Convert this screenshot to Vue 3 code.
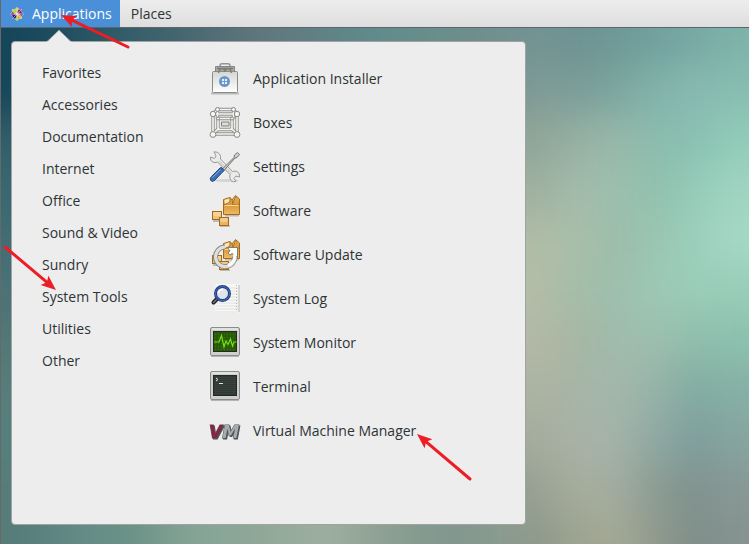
<script setup>
import { ref } from 'vue'

const categories = [
  'Favorites', 'Accessories', 'Documentation', 'Internet', 'Office',
  'Sound & Video', 'Sundry', 'System Tools', 'Utilities', 'Other'
]
const selected = ref('System Tools')

const apps = [
  { id: 'installer', name: 'Application Installer' },
  { id: 'boxes', name: 'Boxes' },
  { id: 'settings', name: 'Settings' },
  { id: 'software', name: 'Software' },
  { id: 'update', name: 'Software Update' },
  { id: 'log', name: 'System Log' },
  { id: 'monitor', name: 'System Monitor' },
  { id: 'terminal', name: 'Terminal' },
  { id: 'vm', name: 'Virtual Machine Manager' }
]

// Wallpaper colour mesh, blended by a blur filter
const top = '15465a 1f4d5f 2b5664 375f6b 44656f 526d76 5f777c 617c82 5f8488 608b8c 668d8b 6c8e8b 718f8e'
const bottom = '557c79 5f8583 668e86 6b9287 80a092 88a799 8ea696 98ac9c 9caea0 8fa193 869b8f 81968f 8a9c90'
const left = ['', '', '325f69', '3a6770', '416d73', '4a7277', '527876', '577d7b', '54807c', '', '']
const right = [
  '739493 6e9293 6e9896 72a09e 78a9a4 7db3aa',
  '819c97 7b9c97 7ba69e 83b2aa 87bab1 87bdb0',
  '90a598 96b0a3 98b8aa 8bbcad 89c0b2 92ccb9',
  '9fb0a0 a3bba9 9dbfae 91c0ae 94ccb8 9fd4c1',
  'b0bca6 a9bfa9 9cbdaa 9ac5b1 9bd0bc a5d9c6',
  'b3bda8 a5bda7 9dbfac 9cc8b5 9bcdb9 98cdb8',
  'b3b8a5 a7b7a3 a0bbab 9dbfb0 8fbdab 8cc1af',
  'adb3a2 a6b5a6 a4b7ab 96b3a8 82aba1 86b0a5',
  'a5ac9d a8b2a6 a4b3a9 90a8a2 7e9e9b 87a5a0',
  '98a193 a6ac9b a3aea0 8b9b92 80928f 879895',
  '8c988a 9da390 a5a995 909b8c 7f8e89 869390'
]
const cells = []
right.forEach((row, r) => {
  const east = row.split(' ')
  const west = r < 2 ? top.split(' ') : r > 8 ? bottom.split(' ') : [...Array(12).fill(left[r]), east[0]]
  const line = [...west, ...east]
  line.forEach((color, c) => {
    const x0 = c === 0 ? -120 : c * 40 - 5
    const x1 = c === line.length - 1 ? 900 : c * 40 + 36
    const y0 = r === 0 ? -100 : r * 50 + 15
    const y1 = r === right.length - 1 ? 700 : r * 50 + 66
    cells.push({ x: x0, y: y0, w: x1 - x0, h: y1 - y0, fill: '#' + color })
  })
})

const arrows = [
  { x: 61, y: 15, tx: 128, ty: 47 },
  { x: 56, y: 290, tx: 5, ty: 247 },
  { x: 417, y: 434, tx: 470, ty: 479 }
].map(a => {
  const len = Math.hypot(a.x - a.tx, a.y - a.ty)
  return { ...a, len, angle: Math.atan2(a.y - a.ty, a.x - a.tx) * 180 / Math.PI }
})
</script>

<template>
  <div class="desktop">
    <svg class="wallpaper" viewBox="0 0 749 544" preserveAspectRatio="none" aria-hidden="true">
      <defs>
        <filter id="soft" filterUnits="userSpaceOnUse" x="-120" y="-100" width="1020" height="800" color-interpolation-filters="sRGB">
          <feGaussianBlur stdDeviation="18" />
        </filter>
      </defs>
      <g filter="url(#soft)">
        <rect v-for="(c, i) in cells" :key="i" :x="c.x" :y="c.y" :width="c.w" :height="c.h" :fill="c.fill" />
      </g>
    </svg>

    <header class="bar">
      <button class="bar-item active" type="button" aria-expanded="true">
        <svg class="logo" viewBox="0 0 14 14" aria-hidden="true">
          <path d="M7 0L9 2H12V5L14 7L12 9V12H9L7 14L5 12H2V9L0 7L2 5V2H5Z" fill="#d9d4e4" />
          <path d="M2.500 2.500H6.500V6.500H2.500Z" fill="#a5cd39" />
          <path d="M7.500 2.500H11.500V6.500H7.500Z" fill="#932279" />
          <path d="M2.500 7.500H6.500V11.500H2.500Z" fill="#262577" />
          <path d="M7.500 7.500H11.500V11.500H7.500Z" fill="#efa724" />
          <path d="M7 .5L9 2.500L7 4.500L5 2.500Z" fill="#d6c94a" />
          <path d="M.5 7L2.500 5L4.500 7L2.500 9Z" fill="#932279" />
          <path d="M13.500 7L11.500 5L9.500 7L11.500 9Z" fill="#5b4a94" />
          <path d="M7 13.500L9 11.500L7 9.500L5 11.500Z" fill="#9ccd2a" />
          <path d="M7 1V13M1 7H13M3 3L11 11M11 3L3 11" stroke="#f1edf5" stroke-width=".5" />
        </svg>
        <span>Applications</span>
      </button>
      <button class="bar-item" type="button">Places</button>
    </header>

    <main class="menu">
      <svg class="pointer" viewBox="0 0 26 13" aria-hidden="true">
        <path d="M0 13V12L2 11L13 0L24 11L26 12V13Z" fill="#ededed" />
        <path d="M1 11.500L13 .5L25 11.500" fill="none" stroke="#b4babb" stroke-width=".8" />
      </svg>
      <nav class="categories" aria-label="Categories">
        <button v-for="c in categories" :key="c" class="category" type="button"
          :aria-pressed="selected === c" @click="selected = c">{{ c }}</button>
      </nav>
      <nav class="apps" aria-label="Programs">
        <button v-for="app in apps" :key="app.id" class="app" type="button">
          <svg class="icon" viewBox="0 0 32 32" aria-hidden="true">
            <defs>
              <linearGradient :id="app.id + '-light'" x1="0" y1="0" x2="0" y2="1">
                <stop offset="0" stop-color="#d5d7d2" /><stop offset="1" stop-color="#ffffff" />
              </linearGradient>
              <linearGradient :id="app.id + '-amber'" x1="0" y1="0" x2="0" y2="1">
                <stop offset="0" stop-color="#f6cf8e" /><stop offset=".45" stop-color="#d99535" /><stop offset="1" stop-color="#eebb69" />
              </linearGradient>
            </defs>

            <g v-if="app.id === 'installer'">
              <path d="M2 30.500H30" stroke="#b9b9b7" stroke-width="2" />
              <path d="M11 5V3Q11 .8 13 .8H19Q21 .8 21 3V5" fill="none" stroke="#92948f" stroke-width="1.500" />
              <path d="M6.500 3.500H25.500V9.500H6.500Z" fill="#a9aba6" stroke="#858782" />
              <path d="M8 5.500H24" stroke="#777973" stroke-width="1.500" />
              <rect x="3.500" y="8.500" width="25" height="21" rx="1" fill="url(#installer-light)" stroke="#8a8c87" />
              <path d="M9.500 10Q10.500 5.500 13 5.500Q15.500 5.500 16 9Q16.500 5.500 19 5.500Q21.500 5.500 22.500 10" fill="none" stroke="#7e807b" stroke-width="1.500" />
              <circle cx="15.500" cy="18.500" r="5.500" fill="#6f9bd1" />
              <circle cx="15.500" cy="18.500" r="4.200" fill="none" stroke="#5b8cca" stroke-width=".7" />
              <path d="M13 16h2v2h-2zM16 16h2v2h-2zM13 19h2v2h-2zM16 19h2v2h-2z" fill="#e8f0f8" />
            </g>

            <g v-else-if="app.id === 'boxes'">
              <g fill="none" stroke="#90928d" stroke-width="3.400">
                <path d="M8.500 2.500H24.500L28 7V27H4V7ZM4 7H28M8.500 2.500V12M24.500 2.500V12M4 27L10 21M28 27L22 21" />
                <path d="M9 11.500H23V22.500H9Z" />
              </g>
              <g fill="none" stroke="#f4f4f2" stroke-width="1.600">
                <path d="M8.500 2.500H24.500L28 7V27H4V7ZM4 7H28M8.500 2.500V12M24.500 2.500V12M4 27L10 21M28 27L22 21" />
                <path d="M9 11.500H23V22.500H9Z" />
              </g>
              <path d="M12.500 15H20V19H12.500Z" fill="#dcddda" stroke="#7e807b" />
              <g fill="#f5f5f3" stroke="#888a85">
                <circle cx="8.500" cy="2.500" r="2" /><circle cx="24.500" cy="2.500" r="2" />
                <circle cx="9" cy="11.500" r="1.500" /><circle cx="23" cy="11.500" r="1.500" />
                <circle cx="4" cy="7" r="2.700" /><circle cx="28" cy="7" r="2.700" />
                <circle cx="4" cy="27.500" r="2.900" /><circle cx="28" cy="27.500" r="2.900" />
              </g>
            </g>

            <g v-else-if="app.id === 'settings'">
              <ellipse cx="17" cy="29.500" rx="13" ry="1.500" fill="#d3d3d2" />
              <path d="M5 .8L7 5L5.500 7.500L1.500 6Q.8 9.500 3.500 11Q6 12.300 8.500 11L21 23.500Q20 27 22 29.500Q24 31.500 27 30.500L25 27.500L27 25L30.500 26Q31 22.500 28.500 20.800Q26 19.500 23.500 20.500L11.500 8Q12 5 10.500 3Q8.500 .5 5 .8Z" fill="#ebecea" stroke="#999b96" />
              <path d="M10 10L22.500 22.500" stroke="#cfd1cc" stroke-width="1.500" />
              <path d="M12.500 19L25 6.500L25.500 4L28.500 1.500L30.500 3.500L28 6.500L26 7L14 20.500Z" fill="#d0d2ce" stroke="#6f716c" />
              <path d="M13 17L15 19.500L6 29Q3.500 31.500 1.800 29.500Q.3 27.500 2.500 25.500L11 17Q12 16 13 17Z" fill="#3e70b5" stroke="#204a87" />
              <path d="M3.500 26.500L11.500 18.500" stroke="#86abd9" stroke-width=".9" />
            </g>

            <g v-else-if="app.id === 'software' || app.id === 'update'">
              <path d="M4 26H12M11 31.500H21M16 20.500H30" stroke="#bdbbb5" stroke-width="2" />
              <path d="M14.500 4.500L21 2.500L23 5L26.500 .5L30.500 4V19.500H14.500Z" :fill="`url(#${app.id}-amber)`" stroke="#a56a16" />
              <path d="M15.500 5L20.500 3.500V8L16 9Z" fill="#fbe7c2" />
              <path d="M21 2.500V7L15 10M23 5L24 10L29.500 10L27 1L24 8" fill="none" stroke="#ad7019" />
              <path d="M26.500 1.500L29.500 4.500V10L26.500 8Z" fill="#d8a04c" />
              <path d="M15.500 10.500H29.500" stroke="#f6d7a3" />
              <rect x="3.500" y="16.500" width="9" height="8" fill="#eec27d" stroke="#a56a16" />
              <path d="M4.500 18H11.500M4.500 20H11.500" stroke="#fae4be" />
              <rect x="10.500" y="22.500" width="9" height="8" fill="#e9b565" stroke="#a56a16" />
              <path d="M11.500 24H18.500M11.500 26H18.500" stroke="#fae4be" />
              <g v-if="app.id === 'update'">
                <path d="M16 8A9.800 9.800 0 1 0 26 17" fill="none" stroke="#858782" stroke-width="5" />
                <path d="M16 8A9.800 9.800 0 1 0 26 16" fill="none" stroke="#dfe0de" stroke-width="3.200" />
                <path d="M26 16Q26 23.500 19 26.500" fill="none" stroke="#fbfbfa" stroke-width="3.200" />
                <path d="M18.500 8.500H28.500V18.500L25.500 16L23 14.500L21 16L19 14L21 12Z" fill="#fbfbfa" stroke="#7d7f7a" />
                <path d="M25.800 14.500V18" stroke="#fbfbfa" stroke-width="3" />
              </g>
            </g>

            <g v-else-if="app.id === 'log'">
              <rect x="6.500" y="1" width="24" height="29" fill="#f7f7f6" />
              <path d="M30 2V29" stroke="#b5b6b3" />
              <path d="M7 5H29M7 8H29M7 11H29M7 14H29M7 17H29M7 20H29M7 23H29M7 26H29M7 29H29" stroke="#dcdddb" stroke-width=".8" />
              <path d="M27.500 2V29" stroke="#b7b8b5" stroke-dasharray="1 2" />
              <path d="M9 15L4.500 19.500" stroke="#171b22" stroke-width="4" stroke-linecap="round" />
              <path d="M8 16L4 20" stroke="#777b82" stroke-width="1.500" />
              <circle cx="13.500" cy="10.500" r="7" fill="#dfe4eb" stroke="#1f3c80" stroke-width="3" />
              <circle cx="13.500" cy="10.500" r="7" fill="none" stroke="#4a70c2" />
              <path d="M9.500 10Q10 6.500 14 6.500" fill="none" stroke="#fff" stroke-width="1.500" />
            </g>

            <g v-else-if="app.id === 'monitor' || app.id === 'terminal'">
              <path d="M2 29.500H30" stroke="#b5b6b4" />
              <rect x="1.500" y=".5" width="29" height="28" rx="1.500" fill="#cfd0ce" stroke="#8b8d89" />
              <path d="M3 2H29" stroke="#f3f3f2" />
              <rect x="4.500" y="4.500" width="23" height="20" :fill="app.id === 'monitor' ? '#285a09' : '#2f3835'" stroke="#222b22" />
              <g v-if="app.id === 'monitor'">
                <path d="M6 7.500H27M6 10.500H27M6 13.500H27M6 16.500H27M6 19.500H27M6 22.500H27" stroke="#3d7812" stroke-dasharray="1 2" />
                <path d="M5 15H10L12.500 8.500L15 20L17 14L19 17.500L21.500 12L23.500 19L25 15H27.500" fill="none" stroke="#75df13" stroke-width="1.200" />
              </g>
              <g v-else>
                <path d="M5 6.500H27M5 8.500H27M5 10.500H27M5 12.500H27M5 14.500H27M5 16.500H27M5 18.500H27M5 20.500H27M5 22.500H27" stroke="#39423f" />
                <path d="M7 7L9 8.500L7 10M10 12.500H14" fill="none" stroke="#e3e5e3" />
              </g>
            </g>

            <text v-else class="vm-mark" x="0" y="23" stroke="#505255"><tspan fill="#8d2340">V</tspan><tspan fill="#a8acae">M</tspan></text>
          </svg>
          <span>{{ app.name }}</span>
        </button>
      </nav>
    </main>

    <svg class="annotations" width="749" height="544" aria-hidden="true">
      <g v-for="(a, i) in arrows" :key="i" :transform="`translate(${a.x} ${a.y}) rotate(${a.angle})`" fill="#ee1c25">
        <path :d="`M${-a.len} 0H-9`" stroke="#ee1c25" stroke-width="3" stroke-linecap="round" />
        <path d="M0 0L-15 -6L-12 0L-15 6Z" />
      </g>
    </svg>
  </div>
</template>

<style>
body {
  margin: 0;
}
</style>

<style scoped>
.desktop {
  position: relative;
  isolation: isolate;
  display: flex;
  flex-direction: column;
  box-sizing: border-box;
  min-height: 100vh;
  border-left: 1px solid #686868;
  overflow: hidden;
  font-family: "Open Sans", "Noto Sans", sans-serif;
  font-size: 14px;
  line-height: 20px;
  color: #2e3436;
}
.wallpaper {
  position: absolute;
  inset: 0;
  z-index: -1;
  width: 100%;
  height: 100%;
}
button {
  margin: 0;
  border: 0;
  background: none;
  color: inherit;
  font: inherit;
  text-align: left;
  white-space: nowrap;
}
.bar {
  display: flex;
  height: 27px;
  border-bottom: 1px solid #5c6567;
  background: linear-gradient(#ededed, #dedede);
}
.bar-item {
  display: flex;
  align-items: center;
  gap: 8px;
  padding: 0 11px;
}
.bar-item.active {
  padding: 0 8px 0 9px;
  background: #4a90d9;
  color: #fff;
}
.logo {
  width: 14px;
  height: 14px;
}
.menu {
  position: relative;
  display: grid;
  grid-template-columns: 167px 1fr;
  flex: 1;
  box-sizing: border-box;
  max-width: 515px;
  width: calc(100% - 20px);
  margin: 13px 10px 19px;
  padding: 15px 30px;
  border: 1px solid #a1a3a2;
  border-radius: 4px;
  background: #ededed;
}
.pointer {
  position: absolute;
  top: -12px;
  left: 34px;
  width: 26px;
  height: 13px;
}
.categories,
.apps {
  display: flex;
  flex-direction: column;
}
.category {
  height: 32px;
  padding: 0;
}
.app {
  display: flex;
  align-items: center;
  gap: 12px;
  height: 44px;
  padding: 0;
}
.icon {
  width: 32px;
  height: 32px;
}
.vm-mark {
  font-family: "DejaVu Sans", sans-serif;
  font-size: 17px;
  font-weight: bold;
  font-style: italic;
  stroke-width: 1px;
  paint-order: stroke;
  filter: drop-shadow(1px 1px 0 #505255);
}
.annotations {
  position: absolute;
  top: 0;
  left: -1px;
  pointer-events: none;
}
</style>
